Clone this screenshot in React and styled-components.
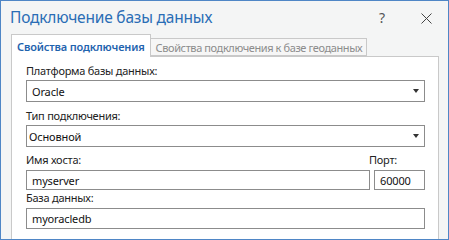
import React from "react";
import styled, { createGlobalStyle } from "styled-components";

const GlobalStyle = createGlobalStyle`
  html, body {
    margin: 0;
    padding: 0;
    background: #f4f5f5;
  }
  * {
    box-sizing: border-box;
  }
`;

const Window = styled.div`
  width: 449px;
  height: 240px;
  border: 1px solid #4f86c6;
  background: #f4f5f5;
  overflow: hidden;
  display: flex;
  flex-direction: column;
  font-family: "Noto Sans", "Open Sans", sans-serif;
  letter-spacing: -0.15px;
`;

const TitleBar = styled.div`
  height: 33px;
  display: flex;
  align-items: center;
  padding: 0 16px 1px 9px;
  flex-shrink: 0;
`;

const Title = styled.div`
  flex: 1;
  font-size: 15.5px;
  letter-spacing: -0.2px;
  color: #2a6db5;
`;

const HelpButton = styled.div`
  font-size: 14px;
  color: #555;
  margin-right: 36px;
`;

const CloseButton = styled.div`
  width: 11px;
  height: 11px;
  display: flex;
  margin-top: 2px;
`;

const Tabs = styled.div`
  display: flex;
  align-items: flex-end;
  padding-left: 10px;
  height: 22px;
  flex-shrink: 0;
  position: relative;
  z-index: 1;
`;

const Tab = styled.div`
  height: ${(p) => (p.$active ? "23px" : "18px")};
  padding: ${(p) => (p.$active ? "0 5px 0 5px" : "0 4px 0 5px")};
  border: 1px solid #c9c9c9;
  border-bottom: ${(p) => (p.$active ? "none" : "1px solid #c9c9c9")};
  border-left: ${(p) => (p.$active ? "1px solid #c9c9c9" : "none")};
  background: ${(p) => (p.$active ? "#ffffff" : "#f6f6f6")};
  color: ${(p) => (p.$active ? "#1f63ae" : "#8c8c8c")};
  font-weight: ${(p) => (p.$active ? 600 : 400)};
  letter-spacing: ${(p) => (p.$active ? "-0.15px" : "-0.4px")};
  font-size: 11px;
  display: flex;
  align-items: center;
  white-space: nowrap;
  margin-bottom: ${(p) => (p.$active ? "-1px" : "0")};
`;

const Panel = styled.div`
  flex: 1;
  margin: 0 9px 0 10px;
  background: #ffffff;
  border: 1px solid #c9c9c9;
  border-bottom: none;
  padding: 6px 13px 0 14px;
  display: flex;
  flex-direction: column;
`;

const Label = styled.div`
  font-size: 11px;
  line-height: 16px;
  color: #222;
  letter-spacing: -0.25px;
  margin-top: ${(p) => p.$mt || 0}px;
  margin-bottom: ${(p) => p.$mb ?? 1}px;
  white-space: nowrap;
`;

const Select = styled.div`
  height: 22px;
  border: 1px solid #8c8c8c;
  display: flex;
  align-items: center;
  padding-left: ${(p) => p.$pad || 5}px;
  padding-right: 5px;
  font-size: 11px;
  color: #111;
`;

const SelectText = styled.span`
  flex: 1;
`;

const Arrow = styled.span`
  width: 0;
  height: 0;
  border-left: 3px solid transparent;
  border-right: 3px solid transparent;
  border-top: 4px solid #333;
`;

const Input = styled.div`
  height: ${(p) => p.$h || 20}px;
  border: 1px solid #8c8c8c;
  display: flex;
  align-items: center;
  padding-left: 5px;
  font-size: 11px;
  color: #111;
`;

const HostRow = styled.div`
  display: grid;
  grid-template-columns: 1fr 51px;
  column-gap: 4px;
  margin-top: 5px;
`;

const PortLabel = styled(Label)`
  margin-left: -5px;
`;

export default function App() {
  return (
    <>
      <GlobalStyle />
      <Window>
        <TitleBar>
          <Title>Подключение базы данных</Title>
          <HelpButton>?</HelpButton>
          <CloseButton>
            <svg width="11" height="11" viewBox="0 0 11 11">
              <path d="M0.5 0.5 L10.5 10.5 M10.5 0.5 L0.5 10.5" stroke="#444" strokeWidth="1" fill="none" />
            </svg>
          </CloseButton>
        </TitleBar>
        <Tabs>
          <Tab $active>Свойства подключения</Tab>
          <Tab>Свойства подключения к базе геоданных</Tab>
        </Tabs>
        <Panel>
          <Label>Платформа базы данных:</Label>
          <Select $pad={5}>
            <SelectText>Oracle</SelectText>
            <Arrow />
          </Select>
          <Label $mt={6}>Тип подключения:</Label>
          <Select $pad={2}>
            <SelectText>Основной</SelectText>
            <Arrow />
          </Select>
          <HostRow>
            <div>
              <Label $mb={2}>Имя хоста:</Label>
              <Input>myserver</Input>
            </div>
            <div>
              <PortLabel $mb={2}>Порт:</PortLabel>
              <Input>60000</Input>
            </div>
          </HostRow>
          <Label $mt={0} $mb={2}>База данных:</Label>
          <Input $h={21}>myoracledb</Input>
        </Panel>
      </Window>
    </>
  );
}
